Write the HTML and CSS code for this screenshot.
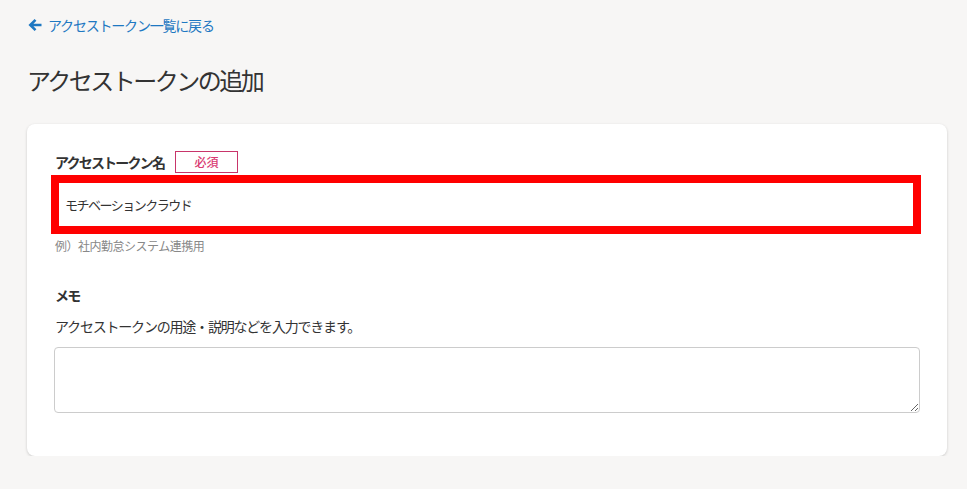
FILE: index.html
```html
<!DOCTYPE html>
<html lang="ja">
<head>
<meta charset="utf-8">
<title>アクセストークンの追加</title>
<link rel="stylesheet" href="styles.css">
</head>
<body>
<div class="page">
  <a class="back" href="#">
    <svg class="back-icon" width="14" height="14" viewBox="0 0 14 14" aria-hidden="true">
      <path d="M13.5 7H2.5M7.5 1.8L2.3 7l5.2 5.2" fill="none" stroke="currentColor" stroke-width="2.6" stroke-linecap="butt" stroke-linejoin="miter"/>
    </svg>
    <span>アクセストークン一覧に戻る</span>
  </a>
  <h1 class="title">アクセストークンの追加</h1>
  <div class="card">
    <div class="label-row">
      <span class="label">アクセストークン名</span>
      <span class="badge">必須</span>
    </div>
    <div class="input-box">
      <input class="input" type="text" value="モチベーションクラウド">
    </div>
    <p class="hint">例）社内勤怠システム連携用</p>
    <div class="label memo-label">メモ</div>
    <p class="desc">アクセストークンの用途・説明などを入力できます。</p>
    <textarea class="textarea"></textarea>
  </div>
</div>
</body>
</html>
```
FILE: styles.css
```css
* { box-sizing: border-box; }
html, body { margin: 0; padding: 0; }
body {
  background: #f7f6f5;
  font-family: "Noto Sans CJK JP", "Noto Sans", sans-serif;
  color: #333;
}
.page {
  padding: 15px 20px 0 27px;
}
.back {
  display: flex;
  align-items: center;
  gap: 6px;
  color: #1e78c2;
  text-decoration: none;
  font-size: 14px;
  line-height: 20px;
  height: 20px;
  width: max-content;
  letter-spacing: -1.2px;
}
.back-icon { color: #1e78c2; margin-left: 1px; }
.title {
  margin: 28px 0 0;
  font-size: 24px;
  line-height: 34px;
  font-weight: 400;
  color: #333;
  letter-spacing: -2.5px;
}
.card {
  margin-top: 27px;
  background: #fff;
  border-radius: 8px;
  box-shadow: 0 1px 3px rgba(0,0,0,0.18);
  padding: 27px 27px 43px 27px;
  display: flex;
  flex-direction: column;
}
.label-row {
  display: flex;
  align-items: center;
  gap: 11px;
  height: 22px;
}
.label {
  font-size: 14px;
  font-weight: 700;
  line-height: 20px;
  color: #333;
  padding-left: 1px;
  letter-spacing: -1.8px;
}
.badge {
  display: flex;
  align-items: center;
  justify-content: center;
  width: 63px;
  height: 22px;
  border: 1px solid #c8356a;
  color: #d93a72;
  font-size: 12px;
  line-height: 14px;
  font-weight: 500;
}
.input-box {
  margin: 2px -1px 0 -3px;
  height: 59px;
  border: 8px solid #ff0000;
  background: #fff;
  display: flex;
}
.input {
  flex: 1;
  border: none;
  outline: none;
  font-family: inherit;
  font-size: 13px;
  letter-spacing: -1.5px;
  color: #333;
  padding: 0 0 0 6px;
  background: transparent;
}
.hint {
  margin: 4px 0 0;
  font-size: 12px;
  line-height: 16px;
  color: #888;
  padding-left: 1px;
  letter-spacing: -0.5px;
}
.memo-label {
  margin-top: 31px;
}
.desc {
  margin: 11px 0 0;
  font-size: 14px;
  line-height: 20px;
  color: #333;
  padding-left: 1px;
  letter-spacing: -1.2px;
}
.textarea {
  margin-top: 11px;
  height: 66px;
  width: 100%;
  border: 1px solid #ccc;
  border-radius: 4px;
  resize: vertical;
  font-family: inherit;
  font-size: 14px;
}
```
